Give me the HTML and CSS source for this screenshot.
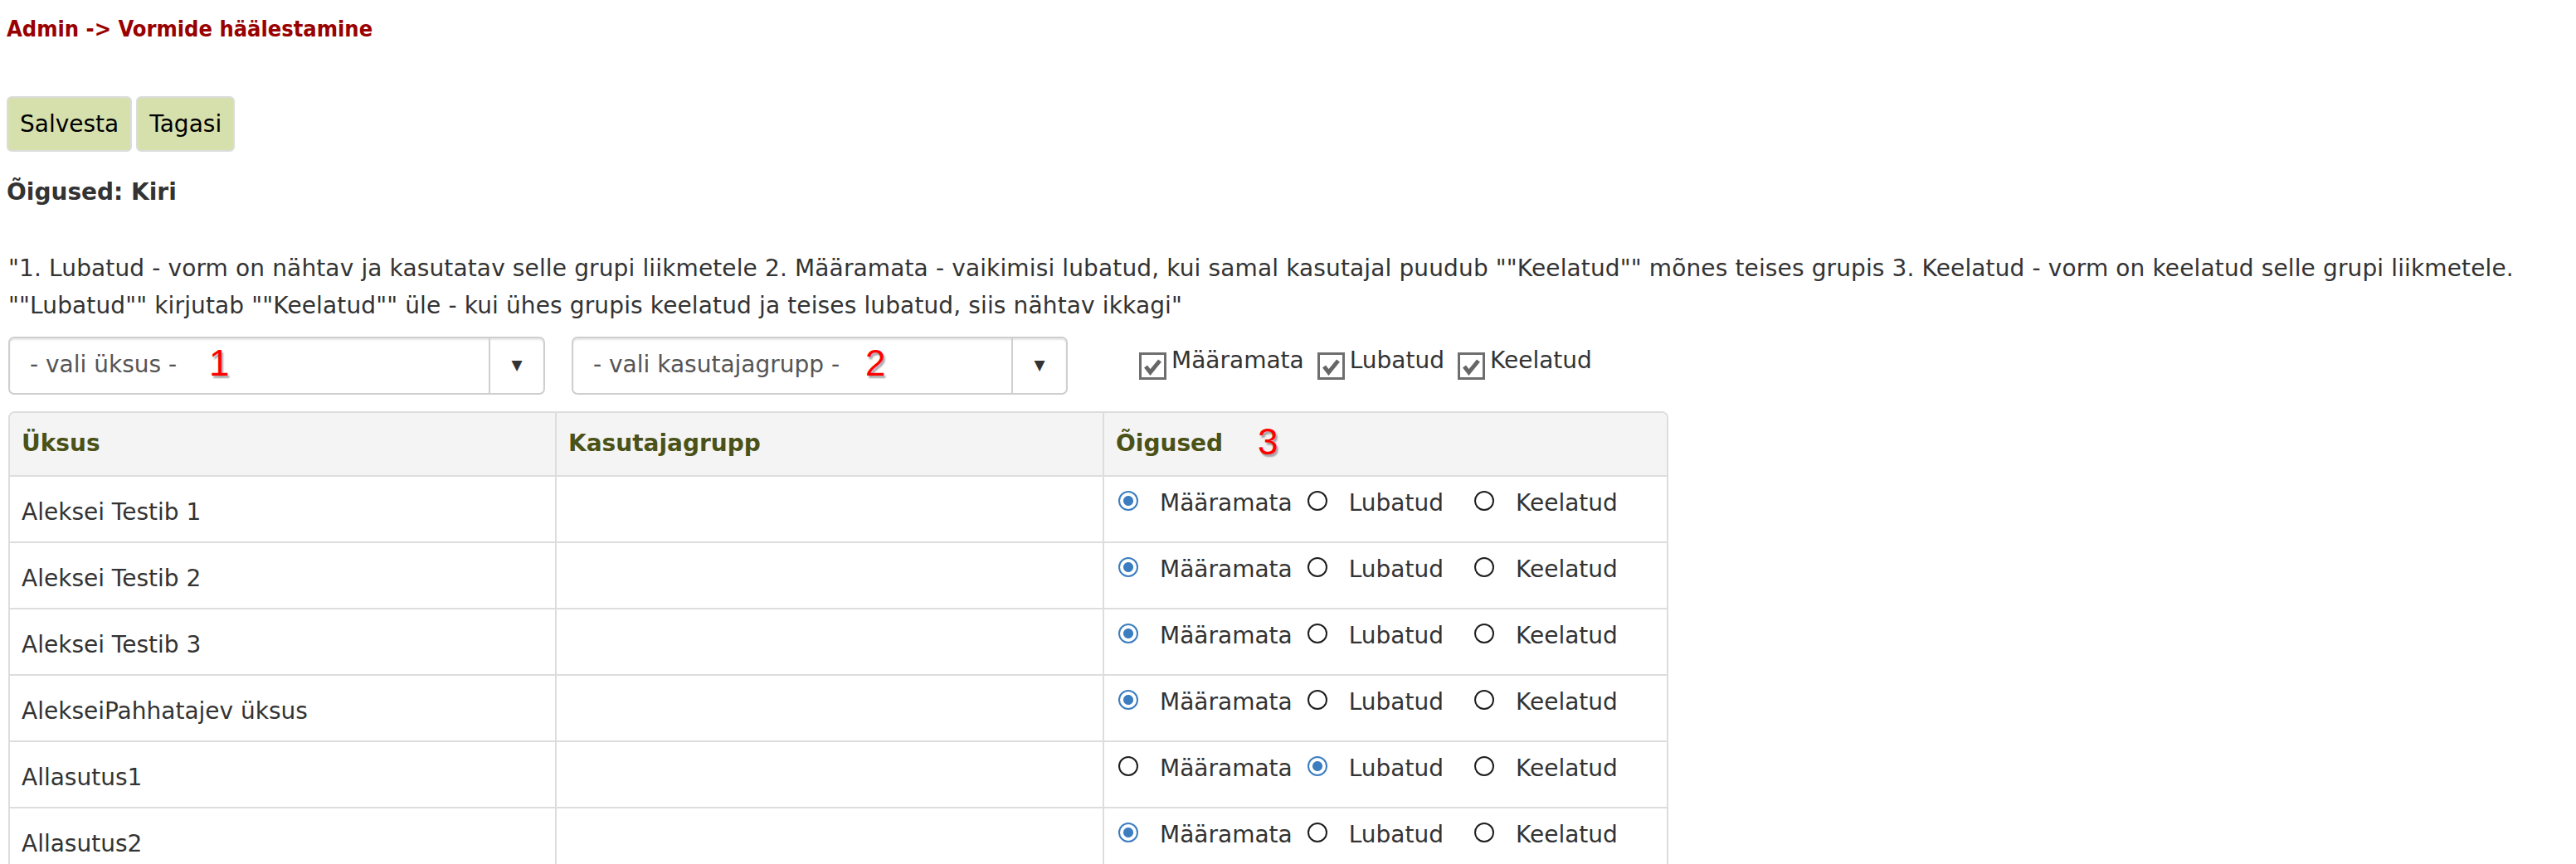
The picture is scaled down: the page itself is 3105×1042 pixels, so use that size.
FILE: index.html
```html
<!DOCTYPE html>
<html lang="et">
<head>
<meta charset="utf-8">
<title>Vormide häälestamine</title>
<link rel="stylesheet" href="styles.css">
</head>
<body>
<div class="crumb">Admin -&gt; Vormide häälestamine</div>
<div class="actions">
  <button class="btn" type="button">Salvesta</button>
  <button class="btn" type="button">Tagasi</button>
</div>
<div class="subtitle">Õigused: Kiri</div>
<p class="desc">"1. Lubatud - vorm on nähtav ja kasutatav selle grupi liikmetele 2. Määramata - vaikimisi lubatud, kui samal kasutajal puudub ""Keelatud"" mõnes teises grupis 3. Keelatud - vorm on keelatud selle grupi liikmetele.<br>""Lubatud"" kirjutab ""Keelatud"" üle - kui ühes grupis keelatud ja teises lubatud, siis nähtav ikkagi"</p>

<div class="filters">
  <div class="select select-unit">
    <span class="select-text">- vali üksus -</span>
    <span class="select-arrow">▼</span>
    <span class="mark mark-1">1</span>
  </div>
  <div class="select select-group">
    <span class="select-text">- vali kasutajagrupp -</span>
    <span class="select-arrow">▼</span>
    <span class="mark mark-2">2</span>
  </div>
  <div class="checks">
    <label class="chk"><svg class="chk-box" width="33" height="33" viewBox="0 0 33 33"><rect x="1.5" y="1.5" width="30" height="30" fill="#fff" stroke="#6e6e6e" stroke-width="3"/><path d="M8 17 L13.5 24 L25 10" fill="none" stroke="#666" stroke-width="5" stroke-linejoin="miter"/></svg><span>Määramata</span></label>
    <label class="chk"><svg class="chk-box" width="33" height="33" viewBox="0 0 33 33"><rect x="1.5" y="1.5" width="30" height="30" fill="#fff" stroke="#6e6e6e" stroke-width="3"/><path d="M8 17 L13.5 24 L25 10" fill="none" stroke="#666" stroke-width="5" stroke-linejoin="miter"/></svg><span>Lubatud</span></label>
    <label class="chk"><svg class="chk-box" width="33" height="33" viewBox="0 0 33 33"><rect x="1.5" y="1.5" width="30" height="30" fill="#fff" stroke="#6e6e6e" stroke-width="3"/><path d="M8 17 L13.5 24 L25 10" fill="none" stroke="#666" stroke-width="5" stroke-linejoin="miter"/></svg><span>Keelatud</span></label>
  </div>
</div>

<table class="grid">
  <colgroup><col class="c1"><col class="c2"><col class="c3"></colgroup>
  <thead>
    <tr><th>Üksus</th><th>Kasutajagrupp</th><th class="th-rights">Õigused<span class="mark mark-3">3</span></th></tr>
  </thead>
  <tbody>
    <tr><td>Aleksei Testib 1</td><td></td><td class="rights"><div class="opts"><span class="opt"><span class="radio on"></span><span class="lbl">Määramata</span></span><span class="opt"><span class="radio"></span><span class="lbl">Lubatud</span></span><span class="opt"><span class="radio"></span><span class="lbl">Keelatud</span></span></div></td></tr>
    <tr><td>Aleksei Testib 2</td><td></td><td class="rights"><div class="opts"><span class="opt"><span class="radio on"></span><span class="lbl">Määramata</span></span><span class="opt"><span class="radio"></span><span class="lbl">Lubatud</span></span><span class="opt"><span class="radio"></span><span class="lbl">Keelatud</span></span></div></td></tr>
    <tr><td>Aleksei Testib 3</td><td></td><td class="rights"><div class="opts"><span class="opt"><span class="radio on"></span><span class="lbl">Määramata</span></span><span class="opt"><span class="radio"></span><span class="lbl">Lubatud</span></span><span class="opt"><span class="radio"></span><span class="lbl">Keelatud</span></span></div></td></tr>
    <tr><td>AlekseiPahhatajev üksus</td><td></td><td class="rights"><div class="opts"><span class="opt"><span class="radio on"></span><span class="lbl">Määramata</span></span><span class="opt"><span class="radio"></span><span class="lbl">Lubatud</span></span><span class="opt"><span class="radio"></span><span class="lbl">Keelatud</span></span></div></td></tr>
    <tr><td>Allasutus1</td><td></td><td class="rights"><div class="opts"><span class="opt"><span class="radio"></span><span class="lbl">Määramata</span></span><span class="opt"><span class="radio on"></span><span class="lbl">Lubatud</span></span><span class="opt"><span class="radio"></span><span class="lbl">Keelatud</span></span></div></td></tr>
    <tr><td>Allasutus2</td><td></td><td class="rights"><div class="opts"><span class="opt"><span class="radio on"></span><span class="lbl">Määramata</span></span><span class="opt"><span class="radio"></span><span class="lbl">Lubatud</span></span><span class="opt"><span class="radio"></span><span class="lbl">Keelatud</span></span></div></td></tr>
  </tbody>
</table>
</body>
</html>
```

FILE: styles.css
```css
html, body { overflow: hidden; }
body {
  margin: 8px;
  font-family: "DejaVu Sans", Verdana, sans-serif;
  font-size: 28px;
  line-height: 1.6;
  color: #333;
  background: #fff;
}
.crumb {
  margin-top: 5px;
  font-family: "DejaVu Sans Condensed", "DejaVu Sans", sans-serif;
  font-stretch: condensed;
  font-weight: bold;
  font-size: 27px;
  color: #990000;
}
.actions {
  margin-top: 60px;
  display: flex;
  gap: 5px;
}
.btn {
  font-family: "DejaVu Sans", Verdana, sans-serif;
  font-size: 28px;
  line-height: 35px;
  padding: 14px 14px;
  border: 2px solid #dcdcdc;
  border-radius: 6px;
  background: #d6e0ad;
  color: #000;
}
.subtitle {
  margin-top: 27px;
  font-weight: bold;
  font-size: 28px;
  color: #333;
}
.desc {
  margin: 47px 0 0 2px;
  white-space: nowrap;
  letter-spacing: 0.13px;
}
.filters {
  margin: 14px 0 0 2px;
  display: flex;
  align-items: flex-start;
}
.select {
  position: relative;
  box-sizing: border-box;
  height: 70px;
  display: flex;
  align-items: stretch;
  border: 2px solid #cfcfcf;
  border-radius: 7px;
  box-shadow: inset 0 2px 2px rgba(0,0,0,0.10);
  color: #555;
  background: #fff;
}
.select-unit { width: 647px; }
.select-group { width: 598px; margin-left: 32px; }
.select-text {
  flex: 1;
  display: flex;
  align-items: center;
  padding-left: 24px;
}
.select-arrow {
  width: 64px;
  border-left: 2px solid #cfcfcf;
  display: flex;
  align-items: center;
  justify-content: center;
  font-size: 17px;
  color: #333;
}
.mark {
  position: absolute;
  font-family: "Liberation Sans", Arial, sans-serif;
  font-size: 44px;
  line-height: 1;
  color: #ff0000;
  text-shadow: 2px 3px 2px rgba(0,0,0,0.35);
  font-weight: normal;
}
.mark-1 { left: 240px; top: 8px; }
.mark-2 { left: 352px; top: 8px; }
.mark-3 { left: 185px; top: 13px; }

.checks {
  margin-left: 86px;
  padding-top: 7px;
  display: flex;
  gap: 16px;
}
.chk {
  display: flex;
  align-items: flex-start;
  color: #333;
}
.chk-box { margin-top: 12px; margin-right: 6px; flex: none; }

.grid {
  margin: 20px 0 0 2px;
  width: 1997px;
  table-layout: fixed;
  border-collapse: separate;
  border-spacing: 0;
  border: 2px solid #dddddd;
  border-radius: 8px;
  border-bottom: none;
}
.c1 { width: 657px; }
.c2 { width: 660px; }
.c3 { width: 680px; }
.grid th, .grid td {
  box-sizing: border-box;
  padding: 0 14px;
  text-align: left;
  border-left: 2px solid #dddddd;
}
.grid th:first-child, .grid td:first-child { border-left: none; }
.grid th {
  position: relative;
  height: 75px;
  background: #f4f4f4;
  color: #4b5218;
  font-weight: bold;
  vertical-align: middle;
}
.grid th:first-child { border-top-left-radius: 6px; }
.grid th:last-child { border-top-right-radius: 6px; }
.grid td {
  height: 80px;
  padding-top: 10px;
  border-top: 2px solid #dddddd;
  vertical-align: middle;
}
.grid td.rights {
  vertical-align: top;
  padding-top: 10px;
}
.opts { display: flex; align-items: flex-start; }
.opt { display: flex; align-items: flex-start; }
.opt + .opt { margin-left: 15px; }
.opt:nth-child(3) { margin-left: 34px; }
.radio {
  box-sizing: border-box;
  width: 24px;
  height: 24px;
  margin: 7px 0 0 3px;
  border: 2px solid #1e1e1e;
  border-radius: 50%;
  flex: none;
}
.radio.on {
  border-color: #3b7dc0;
  background: radial-gradient(circle, #3b7dc0 0 5.5px, #fff 6.5px);
}
.lbl { margin-left: 26px; }
```
